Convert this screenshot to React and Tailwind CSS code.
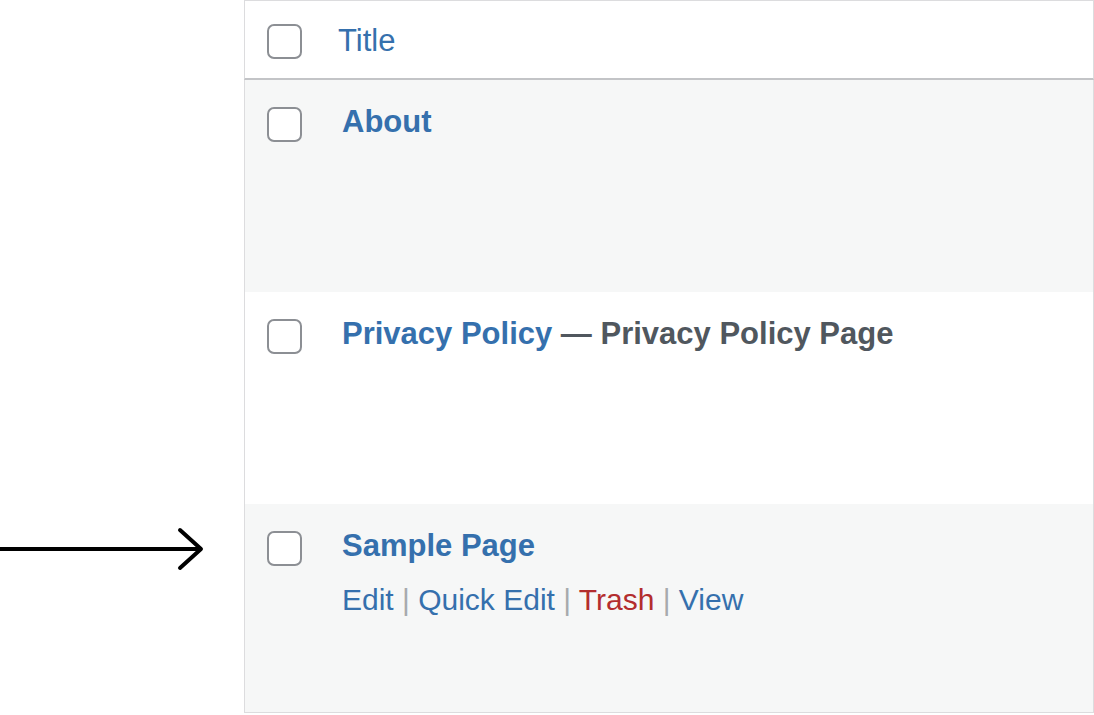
import React from 'react';

const font = { fontFamily: '"Liberation Sans", Arial, sans-serif' };

function Checkbox() {
  return <span className="block w-[35px] h-[35px] shrink-0 rounded-[7px] border-2 border-[#8c8f94] bg-white" />;
}

function Arrow() {
  return (
    <svg width="244" height="60" viewBox="0 0 244 60" className="mt-[15px] block">
      <path d="M0 30 H201" stroke="#000" strokeWidth="4" fill="none" />
      <path d="M180 11 L201 30 L180 49" stroke="#000" strokeWidth="4" fill="none" strokeLinecap="round" strokeLinejoin="round" />
    </svg>
  );
}

function Row({ bg, height, last, arrow, children }) {
  return (
    <div className="flex">
      <div className="w-[244px] shrink-0">{arrow && <Arrow />}</div>
      <div
        className={`flex-1 flex items-start border-x border-[#dcdcde] ${bg} ${height} ${last ? 'border-b' : ''}`}
      >
        <div className="pl-[22px] pt-[27px]">
          <Checkbox />
        </div>
        <div className="ml-[40px] pt-[24px]">{children}</div>
      </div>
    </div>
  );
}

export default function App() {
  return (
    <div className="w-[1094px] h-[715px] bg-white overflow-hidden" style={font}>
      <div className="flex">
        <div className="w-[244px] shrink-0" />
        <div className="flex-1 h-[80px] flex items-start border-x border-t border-[#dcdcde] border-b-2 border-b-[#c3c4c7] bg-white">
          <div className="pl-[22px] pt-[23px]">
            <Checkbox />
          </div>
          <div className="ml-[36px] pt-[22px] text-[31px] leading-[36px] text-[#3570ad]">Title</div>
        </div>
      </div>

      <Row bg="bg-[#f6f7f7]" height="h-[212px]">
        <div className="text-[31px] leading-[36px] font-bold text-[#3570ad]">About</div>
      </Row>

      <Row bg="bg-white" height="h-[212px]">
        <div className="text-[31px] leading-[36px] font-bold">
          <span className="text-[#3570ad]">Privacy Policy</span>
          <span className="text-[#50575e]"> — Privacy Policy Page</span>
        </div>
      </Row>

      <Row bg="bg-[#f6f7f7]" height="h-[209px]" last arrow>
        <div className="text-[31px] leading-[36px] font-bold text-[#3570ad]">Sample Page</div>
        <div className="mt-[18px] text-[30px] leading-[36px] text-[#3570ad] whitespace-nowrap">
          <span>Edit</span>
          <span className="text-[#a7aaad]"> | </span>
          <span>Quick Edit</span>
          <span className="text-[#a7aaad]"> | </span>
          <span className="text-[#b32d2e]">Trash</span>
          <span className="text-[#a7aaad]"> | </span>
          <span>View</span>
        </div>
      </Row>
    </div>
  );
}
